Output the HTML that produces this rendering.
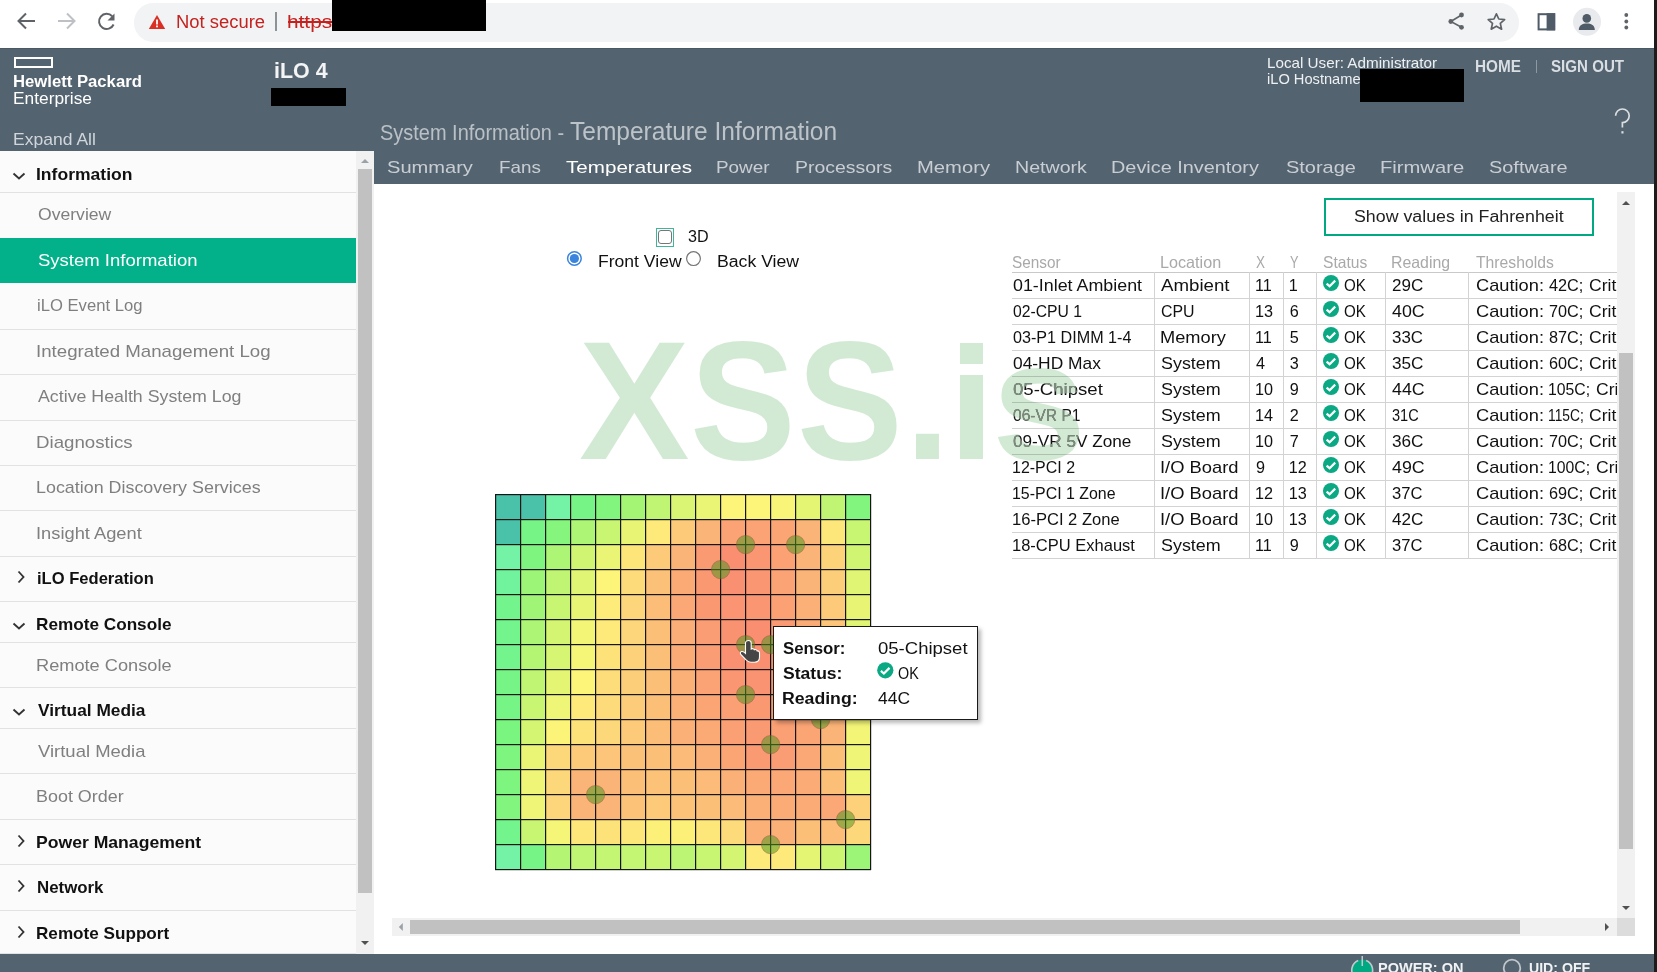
<!DOCTYPE html>
<html><head><meta charset="utf-8"><style>*{margin:0;padding:0}html,body{width:1657px;height:972px;overflow:hidden;background:#1c1c1c;position:relative}
.t{position:absolute;white-space:nowrap;transform-origin:0 0}</style></head><body>
<div style="position:absolute;left:0px;top:0px;width:1657px;height:48px;background:#ffffff;"></div>
<div style="position:absolute;left:1654px;top:0px;width:3px;height:972px;background:#1c1c1c;"></div>
<div style="position:absolute;left:134px;top:3px;width:1384.5px;height:38.6px;background:#f1f3f4;border-radius:19.3px;"></div>
<svg style="position:absolute;left:0;top:0" width="140" height="47">
      <g fill="none" stroke="#5f6368" stroke-width="2">
        <path d="M35 21 H19 M26 13.5 L18.5 21 L26 28.5"/>
      </g>
      <g fill="none" stroke="#bdc1c6" stroke-width="2">
        <path d="M58 21 H74 M67 13.5 L74.5 21 L67 28.5"/>
      </g>
      <g transform="translate(-1 0)"><path d="M113.2 16.2 A7.6 7.6 0 1 0 114.6 24.5" fill="none" stroke="#5f6368" stroke-width="2"/>
      <path d="M115.5 13.5 V20.5 H108.5 Z" fill="#5f6368"/></g>
    </svg>
<svg style="position:absolute;left:148px;top:13.5px" width="18" height="16">
      <path d="M9 1 L17.2 15 H0.8 Z" fill="#d93025"/>
      <rect x="8.1" y="5.5" width="1.8" height="5" fill="#fff"/><rect x="8.1" y="11.5" width="1.8" height="1.8" fill="#fff"/>
    </svg>
<div class="t" id="t0" style="left:175.98px;top:12.70px;font-size:18px;line-height:18px;font-weight:400;color:#c5221f;font-family:'Liberation Sans';transform:scaleX(1.0229);">Not secure</div>
<div style="position:absolute;left:275.3px;top:12.2px;width:1.8px;height:19.3px;background:#8d9297;"></div>
<div class="t" id="t1" style="left:286.84px;top:12.70px;font-size:18px;line-height:18px;font-weight:400;color:#c5221f;font-family:'Liberation Sans';transform:scaleX(1.1572);">https</div>
<div style="position:absolute;left:288px;top:21px;width:44px;height:1.5px;background:#c5221f;"></div>
<div style="position:absolute;left:332px;top:0px;width:154px;height:31px;background:#000;"></div>
<svg style="position:absolute;left:1430px;top:0" width="224" height="47">
      <g fill="#5f6368">
        <circle cx="31.5" cy="15" r="2.4"/>
        <circle cx="20.8" cy="21.5" r="2.4"/>
        <circle cx="31.5" cy="27.3" r="2.4"/>
      </g>
      <path d="M31.5 15 L20.8 21.5 L31.5 27.3" fill="none" stroke="#5f6368" stroke-width="1.6"/>
      <path d="M66.4 13.8 L68.8 19 L74.6 19.6 L70.3 23.4 L71.6 29.2 L66.4 26.2 L61.2 29.2 L62.5 23.4 L58.2 19.6 L64 19 Z" fill="none" stroke="#5f6368" stroke-width="1.7" stroke-linejoin="round"/>
      <rect x="108.6" y="14.2" width="15.6" height="15.2" fill="none" stroke="#4f5b66" stroke-width="2"/>
      <rect x="116.6" y="13.2" width="8.6" height="17.2" fill="#4f5b66"/>
      <circle cx="157" cy="21.8" r="14" fill="#e8eaed"/>
      <circle cx="156.8" cy="18.4" r="4.3" fill="#4f5b66"/>
      <path d="M148.8 30 C148.8 25.2 152.5 23.6 156.8 23.6 C161.1 23.6 164.8 25.2 164.8 30 Z" fill="#4f5b66"/>
      <g fill="#5f6368"><circle cx="196.3" cy="15" r="1.9"/><circle cx="196.3" cy="21.5" r="1.9"/><circle cx="196.3" cy="27.5" r="1.9"/></g>
    </svg>
<div style="position:absolute;left:0px;top:48px;width:1654px;height:136px;background:#546370;"></div>
<div style="position:absolute;left:0px;top:48px;width:1654px;height:1px;background:#4b5864;"></div>
<div style="position:absolute;left:14px;top:57px;width:39px;height:11px;background:transparent;border:2px solid #fff;box-sizing:border-box;"></div>
<div class="t" id="t2" style="left:12.96px;top:74.40px;font-size:16px;line-height:16px;font-weight:700;color:#fff;font-family:'Liberation Sans';transform:scaleX(1.0424);">Hewlett Packard</div>
<div class="t" id="t3" style="left:12.92px;top:90.60px;font-size:16px;line-height:16px;font-weight:400;color:#fff;font-family:'Liberation Sans';transform:scaleX(1.0830);">Enterprise</div>
<div class="t" id="t4" style="left:273.82px;top:60.27px;font-size:21.8px;line-height:21.8px;font-weight:700;color:#f4f4f4;font-family:'Liberation Sans';transform:scaleX(0.9835);">iLO 4</div>
<div style="position:absolute;left:271px;top:88px;width:75px;height:18px;background:#000;"></div>
<div class="t" id="t5" style="left:13.47px;top:130.55px;font-size:17px;line-height:17px;font-weight:400;color:#d0d6dc;font-family:'Liberation Sans';transform:scaleX(1.0315);">Expand All</div>
<div class="t" id="t6" style="left:1266.95px;top:56.27px;font-size:14.5px;line-height:14.5px;font-weight:400;color:#eef1f3;font-family:'Liberation Sans';transform:scaleX(1.0497);">Local User: Administrator</div>
<div class="t" id="t7" style="left:1266.50px;top:71.97px;font-size:14.5px;line-height:14.5px;font-weight:400;color:#eef1f3;font-family:'Liberation Sans';transform:scaleX(1.0096);">iLO Hostname</div>
<div style="position:absolute;left:1360px;top:69px;width:104px;height:33px;background:#000;"></div>
<div class="t" id="t8" style="left:1475.07px;top:58.48px;font-size:16.5px;line-height:16.5px;font-weight:700;color:#d9dee3;font-family:'Liberation Sans';transform:scaleX(0.9279);">HOME</div>
<div style="position:absolute;left:1535.5px;top:60px;width:1.2px;height:13px;background:#8c98a2;"></div>
<div class="t" id="t9" style="left:1550.50px;top:58.48px;font-size:16.5px;line-height:16.5px;font-weight:700;color:#d9dee3;font-family:'Liberation Sans';transform:scaleX(0.9162);">SIGN OUT</div>
<svg style="position:absolute;left:1610px;top:104px" width="24" height="32">
      <path d="M5.6 11.8 A6.8 6.8 0 1 1 12.4 18.6 V23.6" fill="none" stroke="#dcdfe2" stroke-width="1.7"/>
      <rect x="11.4" y="27.2" width="2.1" height="2.3" fill="#dcdfe2"/>
    </svg>
<div class="t" id="t10" style="left:379.50px;top:122.92px;font-size:21.5px;line-height:21.5px;font-weight:400;color:#b9c0c6;font-family:'Liberation Sans';font-weight:300;transform:scaleX(0.9284);">System Information - </div>
<div class="t" id="t11" style="left:570.00px;top:118.73px;font-size:25.5px;line-height:25.5px;font-weight:400;color:#bcc3c9;font-family:'Liberation Sans';font-weight:300;transform:scaleX(0.9616);">Temperature Information</div>
<div class="t" id="t12" style="left:387.00px;top:158.55px;font-size:17px;line-height:17px;font-weight:400;color:#c8ced3;font-family:'Liberation Sans';transform:scaleX(1.1812);">Summary</div>
<div class="t" id="t13" style="left:498.89px;top:158.55px;font-size:17px;line-height:17px;font-weight:400;color:#c8ced3;font-family:'Liberation Sans';transform:scaleX(1.1076);">Fans</div>
<div class="t" id="t14" style="left:566.00px;top:158.55px;font-size:17px;line-height:17px;font-weight:400;color:#ffffff;font-family:'Liberation Sans';transform:scaleX(1.2124);">Temperatures</div>
<div class="t" id="t15" style="left:716.29px;top:158.55px;font-size:17px;line-height:17px;font-weight:400;color:#c8ced3;font-family:'Liberation Sans';transform:scaleX(1.1110);">Power</div>
<div class="t" id="t16" style="left:795.16px;top:158.55px;font-size:17px;line-height:17px;font-weight:400;color:#c8ced3;font-family:'Liberation Sans';transform:scaleX(1.1434);">Processors</div>
<div class="t" id="t17" style="left:916.71px;top:158.55px;font-size:17px;line-height:17px;font-weight:400;color:#c8ced3;font-family:'Liberation Sans';transform:scaleX(1.1890);">Memory</div>
<div class="t" id="t18" style="left:1014.55px;top:158.55px;font-size:17px;line-height:17px;font-weight:400;color:#c8ced3;font-family:'Liberation Sans';transform:scaleX(1.1528);">Network</div>
<div class="t" id="t19" style="left:1111.23px;top:158.55px;font-size:17px;line-height:17px;font-weight:400;color:#c8ced3;font-family:'Liberation Sans';transform:scaleX(1.1680);">Device Inventory</div>
<div class="t" id="t20" style="left:1285.80px;top:158.55px;font-size:17px;line-height:17px;font-weight:400;color:#c8ced3;font-family:'Liberation Sans';transform:scaleX(1.1745);">Storage</div>
<div class="t" id="t21" style="left:1379.81px;top:158.55px;font-size:17px;line-height:17px;font-weight:400;color:#c8ced3;font-family:'Liberation Sans';transform:scaleX(1.1877);">Firmware</div>
<div class="t" id="t22" style="left:1488.90px;top:158.55px;font-size:17px;line-height:17px;font-weight:400;color:#c8ced3;font-family:'Liberation Sans';transform:scaleX(1.1721);">Software</div>
<div style="position:absolute;left:0px;top:151px;width:356px;height:803px;background:#fbfbfb;"></div>
<div style="position:absolute;left:356px;top:151px;width:18px;height:803px;background:#f1f1f1;"></div>
<div style="position:absolute;left:358px;top:169px;width:14px;height:724px;background:#c1c1c1;"></div>
<svg style="position:absolute;left:356px;top:151px" width="18" height="802">
      <path d="M5 12 L9 8 L13 12 Z" fill="#9ca1a5"/>
      <path d="M5 790 L13 790 L9 794 Z" fill="#505050"/>
    </svg>
<div class="t" id="t23" style="left:36.47px;top:165.55px;font-size:17px;line-height:17px;font-weight:700;color:#111;font-family:'Liberation Sans';transform:scaleX(1.0314);">Information</div>
<div style="position:absolute;left:0px;top:192px;width:356px;height:1.3px;background:#dfe3e5;"></div>
<svg style="position:absolute;left:12px;top:171.5px" width="15" height="9"><path d="M1.5 1.5 L7 6.5 L12.5 1.5" fill="none" stroke="#333" stroke-width="1.85"/></svg>
<div class="t" id="t24" style="left:37.50px;top:205.55px;font-size:17px;line-height:17px;font-weight:400;color:#7f7f7f;font-family:'Liberation Sans';transform:scaleX(1.0339);">Overview</div>
<div style="position:absolute;left:0px;top:238px;width:356px;height:45px;background:#02b189;"></div>
<div class="t" id="t25" style="left:37.50px;top:251.55px;font-size:17px;line-height:17px;font-weight:400;color:#ffffff;font-family:'Liberation Sans';transform:scaleX(1.0891);">System Information</div>
<div class="t" id="t26" style="left:36.52px;top:297.05px;font-size:17px;line-height:17px;font-weight:400;color:#7f7f7f;font-family:'Liberation Sans';transform:scaleX(0.9785);">iLO Event Log</div>
<div style="position:absolute;left:0px;top:329px;width:356px;height:1.3px;background:#dfe3e5;"></div>
<div class="t" id="t27" style="left:36.40px;top:343.05px;font-size:17px;line-height:17px;font-weight:400;color:#7f7f7f;font-family:'Liberation Sans';transform:scaleX(1.0983);">Integrated Management Log</div>
<div style="position:absolute;left:0px;top:374px;width:356px;height:1.3px;background:#dfe3e5;"></div>
<div class="t" id="t28" style="left:37.50px;top:388.05px;font-size:17px;line-height:17px;font-weight:400;color:#7f7f7f;font-family:'Liberation Sans';transform:scaleX(1.0454);">Active Health System Log</div>
<div style="position:absolute;left:0px;top:420px;width:356px;height:1.3px;background:#dfe3e5;"></div>
<div class="t" id="t29" style="left:36.40px;top:433.55px;font-size:17px;line-height:17px;font-weight:400;color:#7f7f7f;font-family:'Liberation Sans';transform:scaleX(1.0999);">Diagnostics</div>
<div style="position:absolute;left:0px;top:465px;width:356px;height:1.3px;background:#dfe3e5;"></div>
<div class="t" id="t30" style="left:36.45px;top:479.05px;font-size:17px;line-height:17px;font-weight:400;color:#7f7f7f;font-family:'Liberation Sans';transform:scaleX(1.0517);">Location Discovery Services</div>
<div style="position:absolute;left:0px;top:510px;width:356px;height:1.3px;background:#dfe3e5;"></div>
<div class="t" id="t31" style="left:36.42px;top:525.05px;font-size:17px;line-height:17px;font-weight:400;color:#7f7f7f;font-family:'Liberation Sans';transform:scaleX(1.0760);">Insight Agent</div>
<div style="position:absolute;left:0px;top:556px;width:356px;height:1.3px;background:#dfe3e5;"></div>
<div class="t" id="t32" style="left:36.53px;top:570.05px;font-size:17px;line-height:17px;font-weight:700;color:#111;font-family:'Liberation Sans';transform:scaleX(0.9741);">iLO Federation</div>
<div style="position:absolute;left:0px;top:601px;width:356px;height:1.3px;background:#dfe3e5;"></div>
<svg style="position:absolute;left:16.5px;top:570.0px" width="9" height="14"><path d="M1.5 1.5 L6.5 7 L1.5 12.5" fill="none" stroke="#333" stroke-width="1.85"/></svg>
<div class="t" id="t33" style="left:36.49px;top:615.55px;font-size:17px;line-height:17px;font-weight:700;color:#111;font-family:'Liberation Sans';transform:scaleX(1.0100);">Remote Console</div>
<div style="position:absolute;left:0px;top:642px;width:356px;height:1.3px;background:#dfe3e5;"></div>
<svg style="position:absolute;left:12px;top:621.5px" width="15" height="9"><path d="M1.5 1.5 L7 6.5 L12.5 1.5" fill="none" stroke="#333" stroke-width="1.85"/></svg>
<div class="t" id="t34" style="left:36.43px;top:656.55px;font-size:17px;line-height:17px;font-weight:400;color:#7f7f7f;font-family:'Liberation Sans';transform:scaleX(1.0706);">Remote Console</div>
<div style="position:absolute;left:0px;top:687px;width:356px;height:1.3px;background:#dfe3e5;"></div>
<div class="t" id="t35" style="left:37.50px;top:701.55px;font-size:17px;line-height:17px;font-weight:700;color:#111;font-family:'Liberation Sans';transform:scaleX(1.0185);">Virtual Media</div>
<div style="position:absolute;left:0px;top:728px;width:356px;height:1.3px;background:#dfe3e5;"></div>
<svg style="position:absolute;left:12px;top:707.5px" width="15" height="9"><path d="M1.5 1.5 L7 6.5 L12.5 1.5" fill="none" stroke="#333" stroke-width="1.85"/></svg>
<div class="t" id="t36" style="left:37.50px;top:742.55px;font-size:17px;line-height:17px;font-weight:400;color:#7f7f7f;font-family:'Liberation Sans';transform:scaleX(1.0860);">Virtual Media</div>
<div style="position:absolute;left:0px;top:773px;width:356px;height:1.3px;background:#dfe3e5;"></div>
<div class="t" id="t37" style="left:36.45px;top:788.05px;font-size:17px;line-height:17px;font-weight:400;color:#7f7f7f;font-family:'Liberation Sans';transform:scaleX(1.0547);">Boot Order</div>
<div style="position:absolute;left:0px;top:819px;width:356px;height:1.3px;background:#dfe3e5;"></div>
<div class="t" id="t38" style="left:36.47px;top:834.05px;font-size:17px;line-height:17px;font-weight:700;color:#111;font-family:'Liberation Sans';transform:scaleX(1.0347);">Power Management</div>
<div style="position:absolute;left:0px;top:864px;width:356px;height:1.3px;background:#dfe3e5;"></div>
<svg style="position:absolute;left:16.5px;top:834.0px" width="9" height="14"><path d="M1.5 1.5 L6.5 7 L1.5 12.5" fill="none" stroke="#333" stroke-width="1.85"/></svg>
<div class="t" id="t39" style="left:36.51px;top:879.05px;font-size:17px;line-height:17px;font-weight:700;color:#111;font-family:'Liberation Sans';transform:scaleX(0.9908);">Network</div>
<div style="position:absolute;left:0px;top:910px;width:356px;height:1.3px;background:#dfe3e5;"></div>
<svg style="position:absolute;left:16.5px;top:879.0px" width="9" height="14"><path d="M1.5 1.5 L6.5 7 L1.5 12.5" fill="none" stroke="#333" stroke-width="1.85"/></svg>
<div class="t" id="t40" style="left:36.49px;top:924.55px;font-size:17px;line-height:17px;font-weight:700;color:#111;font-family:'Liberation Sans';transform:scaleX(1.0071);">Remote Support</div>
<div style="position:absolute;left:0px;top:953px;width:356px;height:1.3px;background:#dfe3e5;"></div>
<svg style="position:absolute;left:16.5px;top:924.5px" width="9" height="14"><path d="M1.5 1.5 L6.5 7 L1.5 12.5" fill="none" stroke="#333" stroke-width="1.85"/></svg>
<div style="position:absolute;left:374px;top:184px;width:1280px;height:770px;background:#ffffff;"></div>
<div style="position:absolute;left:1617px;top:192px;width:17.5px;height:726px;background:#f1f1f1;"></div>
<div style="position:absolute;left:1619px;top:353px;width:13.5px;height:496px;background:#c1c1c1;"></div>
<svg style="position:absolute;left:1617px;top:192px" width="18" height="726"><path d="M5 13 L9 9 L13 13 Z" fill="#505050"/><path d="M5 714 L13 714 L9 718 Z" fill="#505050"/></svg>
<div style="position:absolute;left:392px;top:918px;width:1225px;height:18px;background:#f1f1f1;"></div>
<div style="position:absolute;left:410px;top:920px;width:1110px;height:13.7px;background:#c1c1c1;"></div>
<div style="position:absolute;left:1617px;top:918px;width:17.5px;height:18px;background:#dcdcdc;"></div>
<svg style="position:absolute;left:392px;top:918px" width="1225" height="18"><path d="M10.8 5 L10.8 13 L6.8 9 Z" fill="#9ca1a5"/><path d="M1213 5 L1213 13 L1217 9 Z" fill="#505050"/></svg>
<div style="position:absolute;left:1324px;top:197.7px;width:270px;height:38px;background:transparent;border:2px solid #01a982;box-sizing:border-box;"></div>
<div class="t" id="t41" style="left:1353.80px;top:208.90px;font-size:16px;line-height:16px;font-weight:400;color:#222;font-family:'Liberation Sans';transform:scaleX(1.1115);">Show values in Fahrenheit</div>
<div style="position:absolute;left:656px;top:228px;width:18px;height:19px;background:transparent;border:1px solid #3fb59a;box-sizing:border-box;"></div>
<div style="position:absolute;left:658px;top:230px;width:14px;height:14px;background:#fff;border:1.3px solid #767676;border-radius:3px;box-sizing:border-box;"></div>
<div class="t" id="t42" style="left:688.40px;top:228.62px;font-size:16.8px;line-height:16.8px;font-weight:400;color:#111;font-family:'Liberation Sans';transform:scaleX(0.9610);">3D</div>
<svg style="position:absolute;left:560px;top:245px" width="150" height="28"><circle cx="14.4" cy="13.5" r="6.8" fill="#fff" stroke="#3a84de" stroke-width="1.5"/><circle cx="14.4" cy="13.5" r="4.6" fill="#3a84de"/><circle cx="133.5" cy="13.6" r="6.9" fill="#fff" stroke="#767676" stroke-width="1.2"/></svg>
<div class="t" id="t43" style="left:597.50px;top:254.20px;font-size:16px;line-height:16px;font-weight:400;color:#111;font-family:'Liberation Sans';transform:scaleX(1.0975);">Front View</div>
<div class="t" id="t44" style="left:716.70px;top:254.20px;font-size:16px;line-height:16px;font-weight:400;color:#111;font-family:'Liberation Sans';transform:scaleX(1.1036);">Back View</div>
<div class="t" id="t45" style="left:1012.00px;top:253.97px;font-size:16.5px;line-height:16.5px;font-weight:400;color:#a9a9a9;font-family:'Liberation Sans';font-weight:300;transform:scaleX(0.9283);">Sensor</div>
<div class="t" id="t46" style="left:1160.02px;top:253.97px;font-size:16.5px;line-height:16.5px;font-weight:400;color:#a9a9a9;font-family:'Liberation Sans';font-weight:300;transform:scaleX(0.9803);">Location</div>
<div class="t" id="t47" style="left:1256.00px;top:253.97px;font-size:16.5px;line-height:16.5px;font-weight:400;color:#a9a9a9;font-family:'Liberation Sans';font-weight:300;transform:scaleX(0.8182);">X</div>
<div class="t" id="t48" style="left:1289.50px;top:253.97px;font-size:16.5px;line-height:16.5px;font-weight:400;color:#a9a9a9;font-family:'Liberation Sans';font-weight:300;transform:scaleX(0.7727);">Y</div>
<div class="t" id="t49" style="left:1323.00px;top:253.97px;font-size:16.5px;line-height:16.5px;font-weight:400;color:#a9a9a9;font-family:'Liberation Sans';font-weight:300;transform:scaleX(0.9457);">Status</div>
<div class="t" id="t50" style="left:1391.04px;top:253.97px;font-size:16.5px;line-height:16.5px;font-weight:400;color:#a9a9a9;font-family:'Liberation Sans';font-weight:300;transform:scaleX(0.9621);">Reading</div>
<div class="t" id="t51" style="left:1475.60px;top:253.97px;font-size:16.5px;line-height:16.5px;font-weight:400;color:#a9a9a9;font-family:'Liberation Sans';font-weight:300;transform:scaleX(0.9524);">Thresholds</div>
<div style="position:absolute;left:1012px;top:272px;width:605px;height:1.3px;background:#c9c9c9;"></div>
<div style="position:absolute;left:1011px;top:272px;width:606px;height:288px;overflow:hidden">
<div style="position:absolute;left:1px;top:26px;width:605px;height:1.3px;background:#d3d3d3;"></div>
<div style="position:absolute;left:143px;top:0px;width:1.2px;height:26px;background:#d3d3d3;"></div>
<div style="position:absolute;left:238px;top:0px;width:1.2px;height:26px;background:#d3d3d3;"></div>
<div style="position:absolute;left:272px;top:0px;width:1.2px;height:26px;background:#d3d3d3;"></div>
<div style="position:absolute;left:305px;top:0px;width:1.2px;height:26px;background:#d3d3d3;"></div>
<div style="position:absolute;left:374px;top:0px;width:1.2px;height:26px;background:#d3d3d3;"></div>
<div style="position:absolute;left:457px;top:0px;width:1.2px;height:26px;background:#d3d3d3;"></div>
<div class="t" id="t52" style="left:1.60px;top:5.23px;font-size:16.2px;line-height:16.2px;font-weight:400;color:#111;font-family:'Liberation Sans';transform:scaleX(1.1033);">01-Inlet Ambient</div>
<div class="t" id="t53" style="left:150.30px;top:5.23px;font-size:16.2px;line-height:16.2px;font-weight:400;color:#111;font-family:'Liberation Sans';transform:scaleX(1.1539);">Ambient</div>
<div class="t" id="t54" style="left:244.00px;top:5.23px;font-size:16.2px;line-height:16.2px;font-weight:400;color:#111;font-family:'Liberation Sans';">11</div>
<div class="t" id="t55" style="left:277.70px;top:5.23px;font-size:16.2px;line-height:16.2px;font-weight:400;color:#111;font-family:'Liberation Sans';">1</div>
<svg style="position:absolute;left:312px;top:3px" width="17" height="17"><circle cx="8" cy="8" r="8" fill="#0aa883"/><path d="M3.6 8.6 L6.6 11.2 L12.2 5.6" fill="none" stroke="#fff" stroke-width="2.2"/></svg>
<div class="t" id="t56" style="left:332.80px;top:5.23px;font-size:16.2px;line-height:16.2px;font-weight:400;color:#111;font-family:'Liberation Sans';transform:scaleX(0.9368);">OK</div>
<div class="t" id="t57" style="left:381.20px;top:5.23px;font-size:16.2px;line-height:16.2px;font-weight:400;color:#111;font-family:'Liberation Sans';transform:scaleX(1.0531);">29C</div>
<div class="t" id="t58" style="left:464.60px;top:5.23px;font-size:16.2px;line-height:16.2px;font-weight:400;color:#111;font-family:'Liberation Sans';transform:scaleX(1.1272);">Caution:</div>
<div class="t" id="t59" style="left:537.70px;top:5.23px;font-size:16.2px;line-height:16.2px;font-weight:400;color:#111;font-family:'Liberation Sans';transform:scaleX(1.0031);">42C;</div>
<div class="t" id="t60" style="left:577.70px;top:5.23px;font-size:16.2px;line-height:16.2px;font-weight:400;color:#111;font-family:'Liberation Sans';transform:scaleX(1.0827);">Critical: 99C</div>
<div style="position:absolute;left:1px;top:52px;width:605px;height:1.3px;background:#d3d3d3;"></div>
<div style="position:absolute;left:143px;top:26px;width:1.2px;height:26px;background:#d3d3d3;"></div>
<div style="position:absolute;left:238px;top:26px;width:1.2px;height:26px;background:#d3d3d3;"></div>
<div style="position:absolute;left:272px;top:26px;width:1.2px;height:26px;background:#d3d3d3;"></div>
<div style="position:absolute;left:305px;top:26px;width:1.2px;height:26px;background:#d3d3d3;"></div>
<div style="position:absolute;left:374px;top:26px;width:1.2px;height:26px;background:#d3d3d3;"></div>
<div style="position:absolute;left:457px;top:26px;width:1.2px;height:26px;background:#d3d3d3;"></div>
<div class="t" id="t61" style="left:1.60px;top:31.23px;font-size:16.2px;line-height:16.2px;font-weight:400;color:#111;font-family:'Liberation Sans';transform:scaleX(0.9709);">02-CPU 1</div>
<div class="t" id="t62" style="left:150.30px;top:31.23px;font-size:16.2px;line-height:16.2px;font-weight:400;color:#111;font-family:'Liberation Sans';transform:scaleX(0.9825);">CPU</div>
<div class="t" id="t63" style="left:244.00px;top:31.23px;font-size:16.2px;line-height:16.2px;font-weight:400;color:#111;font-family:'Liberation Sans';">13</div>
<div class="t" id="t64" style="left:278.70px;top:31.23px;font-size:16.2px;line-height:16.2px;font-weight:400;color:#111;font-family:'Liberation Sans';">6</div>
<svg style="position:absolute;left:312px;top:29px" width="17" height="17"><circle cx="8" cy="8" r="8" fill="#0aa883"/><path d="M3.6 8.6 L6.6 11.2 L12.2 5.6" fill="none" stroke="#fff" stroke-width="2.2"/></svg>
<div class="t" id="t65" style="left:332.80px;top:31.23px;font-size:16.2px;line-height:16.2px;font-weight:400;color:#111;font-family:'Liberation Sans';transform:scaleX(0.9368);">OK</div>
<div class="t" id="t66" style="left:381.20px;top:31.23px;font-size:16.2px;line-height:16.2px;font-weight:400;color:#111;font-family:'Liberation Sans';transform:scaleX(1.0998);">40C</div>
<div class="t" id="t67" style="left:464.60px;top:31.23px;font-size:16.2px;line-height:16.2px;font-weight:400;color:#111;font-family:'Liberation Sans';transform:scaleX(1.1272);">Caution:</div>
<div class="t" id="t68" style="left:537.70px;top:31.23px;font-size:16.2px;line-height:16.2px;font-weight:400;color:#111;font-family:'Liberation Sans';transform:scaleX(1.0031);">70C;</div>
<div class="t" id="t69" style="left:577.70px;top:31.23px;font-size:16.2px;line-height:16.2px;font-weight:400;color:#111;font-family:'Liberation Sans';transform:scaleX(1.0827);">Critical: 99C</div>
<div style="position:absolute;left:1px;top:78px;width:605px;height:1.3px;background:#d3d3d3;"></div>
<div style="position:absolute;left:143px;top:52px;width:1.2px;height:26px;background:#d3d3d3;"></div>
<div style="position:absolute;left:238px;top:52px;width:1.2px;height:26px;background:#d3d3d3;"></div>
<div style="position:absolute;left:272px;top:52px;width:1.2px;height:26px;background:#d3d3d3;"></div>
<div style="position:absolute;left:305px;top:52px;width:1.2px;height:26px;background:#d3d3d3;"></div>
<div style="position:absolute;left:374px;top:52px;width:1.2px;height:26px;background:#d3d3d3;"></div>
<div style="position:absolute;left:457px;top:52px;width:1.2px;height:26px;background:#d3d3d3;"></div>
<div class="t" id="t70" style="left:1.60px;top:57.23px;font-size:16.2px;line-height:16.2px;font-weight:400;color:#111;font-family:'Liberation Sans';transform:scaleX(0.9971);">03-P1 DIMM 1-4</div>
<div class="t" id="t71" style="left:149.17px;top:57.23px;font-size:16.2px;line-height:16.2px;font-weight:400;color:#111;font-family:'Liberation Sans';transform:scaleX(1.1257);">Memory</div>
<div class="t" id="t72" style="left:244.00px;top:57.23px;font-size:16.2px;line-height:16.2px;font-weight:400;color:#111;font-family:'Liberation Sans';">11</div>
<div class="t" id="t73" style="left:278.70px;top:57.23px;font-size:16.2px;line-height:16.2px;font-weight:400;color:#111;font-family:'Liberation Sans';">5</div>
<svg style="position:absolute;left:312px;top:55px" width="17" height="17"><circle cx="8" cy="8" r="8" fill="#0aa883"/><path d="M3.6 8.6 L6.6 11.2 L12.2 5.6" fill="none" stroke="#fff" stroke-width="2.2"/></svg>
<div class="t" id="t74" style="left:332.80px;top:57.23px;font-size:16.2px;line-height:16.2px;font-weight:400;color:#111;font-family:'Liberation Sans';transform:scaleX(0.9368);">OK</div>
<div class="t" id="t75" style="left:381.20px;top:57.23px;font-size:16.2px;line-height:16.2px;font-weight:400;color:#111;font-family:'Liberation Sans';transform:scaleX(1.0431);">33C</div>
<div class="t" id="t76" style="left:464.60px;top:57.23px;font-size:16.2px;line-height:16.2px;font-weight:400;color:#111;font-family:'Liberation Sans';transform:scaleX(1.1272);">Caution:</div>
<div class="t" id="t77" style="left:537.70px;top:57.23px;font-size:16.2px;line-height:16.2px;font-weight:400;color:#111;font-family:'Liberation Sans';transform:scaleX(1.0031);">87C;</div>
<div class="t" id="t78" style="left:577.70px;top:57.23px;font-size:16.2px;line-height:16.2px;font-weight:400;color:#111;font-family:'Liberation Sans';transform:scaleX(1.0827);">Critical: 99C</div>
<div style="position:absolute;left:1px;top:104px;width:605px;height:1.3px;background:#d3d3d3;"></div>
<div style="position:absolute;left:143px;top:78px;width:1.2px;height:26px;background:#d3d3d3;"></div>
<div style="position:absolute;left:238px;top:78px;width:1.2px;height:26px;background:#d3d3d3;"></div>
<div style="position:absolute;left:272px;top:78px;width:1.2px;height:26px;background:#d3d3d3;"></div>
<div style="position:absolute;left:305px;top:78px;width:1.2px;height:26px;background:#d3d3d3;"></div>
<div style="position:absolute;left:374px;top:78px;width:1.2px;height:26px;background:#d3d3d3;"></div>
<div style="position:absolute;left:457px;top:78px;width:1.2px;height:26px;background:#d3d3d3;"></div>
<div class="t" id="t79" style="left:1.60px;top:83.23px;font-size:16.2px;line-height:16.2px;font-weight:400;color:#111;font-family:'Liberation Sans';transform:scaleX(1.0739);">04-HD Max</div>
<div class="t" id="t80" style="left:150.30px;top:83.23px;font-size:16.2px;line-height:16.2px;font-weight:400;color:#111;font-family:'Liberation Sans';transform:scaleX(1.1069);">System</div>
<div class="t" id="t81" style="left:245.00px;top:83.23px;font-size:16.2px;line-height:16.2px;font-weight:400;color:#111;font-family:'Liberation Sans';">4</div>
<div class="t" id="t82" style="left:278.70px;top:83.23px;font-size:16.2px;line-height:16.2px;font-weight:400;color:#111;font-family:'Liberation Sans';">3</div>
<svg style="position:absolute;left:312px;top:81px" width="17" height="17"><circle cx="8" cy="8" r="8" fill="#0aa883"/><path d="M3.6 8.6 L6.6 11.2 L12.2 5.6" fill="none" stroke="#fff" stroke-width="2.2"/></svg>
<div class="t" id="t83" style="left:332.80px;top:83.23px;font-size:16.2px;line-height:16.2px;font-weight:400;color:#111;font-family:'Liberation Sans';transform:scaleX(0.9368);">OK</div>
<div class="t" id="t84" style="left:381.20px;top:83.23px;font-size:16.2px;line-height:16.2px;font-weight:400;color:#111;font-family:'Liberation Sans';transform:scaleX(1.0598);">35C</div>
<div class="t" id="t85" style="left:464.60px;top:83.23px;font-size:16.2px;line-height:16.2px;font-weight:400;color:#111;font-family:'Liberation Sans';transform:scaleX(1.1272);">Caution:</div>
<div class="t" id="t86" style="left:537.70px;top:83.23px;font-size:16.2px;line-height:16.2px;font-weight:400;color:#111;font-family:'Liberation Sans';transform:scaleX(1.0031);">60C;</div>
<div class="t" id="t87" style="left:577.70px;top:83.23px;font-size:16.2px;line-height:16.2px;font-weight:400;color:#111;font-family:'Liberation Sans';transform:scaleX(1.0827);">Critical: 99C</div>
<div style="position:absolute;left:1px;top:130px;width:605px;height:1.3px;background:#d3d3d3;"></div>
<div style="position:absolute;left:143px;top:104px;width:1.2px;height:26px;background:#d3d3d3;"></div>
<div style="position:absolute;left:238px;top:104px;width:1.2px;height:26px;background:#d3d3d3;"></div>
<div style="position:absolute;left:272px;top:104px;width:1.2px;height:26px;background:#d3d3d3;"></div>
<div style="position:absolute;left:305px;top:104px;width:1.2px;height:26px;background:#d3d3d3;"></div>
<div style="position:absolute;left:374px;top:104px;width:1.2px;height:26px;background:#d3d3d3;"></div>
<div style="position:absolute;left:457px;top:104px;width:1.2px;height:26px;background:#d3d3d3;"></div>
<div class="t" id="t88" style="left:1.60px;top:109.23px;font-size:16.2px;line-height:16.2px;font-weight:400;color:#111;font-family:'Liberation Sans';transform:scaleX(1.1474);">05-Chipset</div>
<div class="t" id="t89" style="left:150.30px;top:109.23px;font-size:16.2px;line-height:16.2px;font-weight:400;color:#111;font-family:'Liberation Sans';transform:scaleX(1.1069);">System</div>
<div class="t" id="t90" style="left:244.00px;top:109.23px;font-size:16.2px;line-height:16.2px;font-weight:400;color:#111;font-family:'Liberation Sans';">10</div>
<div class="t" id="t91" style="left:278.70px;top:109.23px;font-size:16.2px;line-height:16.2px;font-weight:400;color:#111;font-family:'Liberation Sans';">9</div>
<svg style="position:absolute;left:312px;top:107px" width="17" height="17"><circle cx="8" cy="8" r="8" fill="#0aa883"/><path d="M3.6 8.6 L6.6 11.2 L12.2 5.6" fill="none" stroke="#fff" stroke-width="2.2"/></svg>
<div class="t" id="t92" style="left:332.80px;top:109.23px;font-size:16.2px;line-height:16.2px;font-weight:400;color:#111;font-family:'Liberation Sans';transform:scaleX(0.9368);">OK</div>
<div class="t" id="t93" style="left:381.20px;top:109.23px;font-size:16.2px;line-height:16.2px;font-weight:400;color:#111;font-family:'Liberation Sans';transform:scaleX(1.0998);">44C</div>
<div class="t" id="t94" style="left:464.60px;top:109.23px;font-size:16.2px;line-height:16.2px;font-weight:400;color:#111;font-family:'Liberation Sans';transform:scaleX(1.1272);">Caution:</div>
<div class="t" id="t95" style="left:536.73px;top:109.23px;font-size:16.2px;line-height:16.2px;font-weight:400;color:#111;font-family:'Liberation Sans';transform:scaleX(0.9737);">105C;</div>
<div class="t" id="t96" style="left:584.50px;top:109.23px;font-size:16.2px;line-height:16.2px;font-weight:400;color:#111;font-family:'Liberation Sans';transform:scaleX(1.0827);">Critical: 99C</div>
<div style="position:absolute;left:1px;top:156px;width:605px;height:1.3px;background:#d3d3d3;"></div>
<div style="position:absolute;left:143px;top:130px;width:1.2px;height:26px;background:#d3d3d3;"></div>
<div style="position:absolute;left:238px;top:130px;width:1.2px;height:26px;background:#d3d3d3;"></div>
<div style="position:absolute;left:272px;top:130px;width:1.2px;height:26px;background:#d3d3d3;"></div>
<div style="position:absolute;left:305px;top:130px;width:1.2px;height:26px;background:#d3d3d3;"></div>
<div style="position:absolute;left:374px;top:130px;width:1.2px;height:26px;background:#d3d3d3;"></div>
<div style="position:absolute;left:457px;top:130px;width:1.2px;height:26px;background:#d3d3d3;"></div>
<div class="t" id="t97" style="left:1.60px;top:135.23px;font-size:16.2px;line-height:16.2px;font-weight:400;color:#111;font-family:'Liberation Sans';transform:scaleX(0.9604);">06-VR P1</div>
<div class="t" id="t98" style="left:150.30px;top:135.23px;font-size:16.2px;line-height:16.2px;font-weight:400;color:#111;font-family:'Liberation Sans';transform:scaleX(1.1069);">System</div>
<div class="t" id="t99" style="left:244.00px;top:135.23px;font-size:16.2px;line-height:16.2px;font-weight:400;color:#111;font-family:'Liberation Sans';">14</div>
<div class="t" id="t100" style="left:278.70px;top:135.23px;font-size:16.2px;line-height:16.2px;font-weight:400;color:#111;font-family:'Liberation Sans';">2</div>
<svg style="position:absolute;left:312px;top:133px" width="17" height="17"><circle cx="8" cy="8" r="8" fill="#0aa883"/><path d="M3.6 8.6 L6.6 11.2 L12.2 5.6" fill="none" stroke="#fff" stroke-width="2.2"/></svg>
<div class="t" id="t101" style="left:332.80px;top:135.23px;font-size:16.2px;line-height:16.2px;font-weight:400;color:#111;font-family:'Liberation Sans';transform:scaleX(0.9368);">OK</div>
<div class="t" id="t102" style="left:381.20px;top:135.23px;font-size:16.2px;line-height:16.2px;font-weight:400;color:#111;font-family:'Liberation Sans';transform:scaleX(0.8998);">31C</div>
<div class="t" id="t103" style="left:464.60px;top:135.23px;font-size:16.2px;line-height:16.2px;font-weight:400;color:#111;font-family:'Liberation Sans';transform:scaleX(1.1272);">Caution:</div>
<div class="t" id="t104" style="left:536.85px;top:135.23px;font-size:16.2px;line-height:16.2px;font-weight:400;color:#111;font-family:'Liberation Sans';transform:scaleX(0.8519);">115C;</div>
<div class="t" id="t105" style="left:578.40px;top:135.23px;font-size:16.2px;line-height:16.2px;font-weight:400;color:#111;font-family:'Liberation Sans';transform:scaleX(1.0827);">Critical: 99C</div>
<div style="position:absolute;left:1px;top:182px;width:605px;height:1.3px;background:#d3d3d3;"></div>
<div style="position:absolute;left:143px;top:156px;width:1.2px;height:26px;background:#d3d3d3;"></div>
<div style="position:absolute;left:238px;top:156px;width:1.2px;height:26px;background:#d3d3d3;"></div>
<div style="position:absolute;left:272px;top:156px;width:1.2px;height:26px;background:#d3d3d3;"></div>
<div style="position:absolute;left:305px;top:156px;width:1.2px;height:26px;background:#d3d3d3;"></div>
<div style="position:absolute;left:374px;top:156px;width:1.2px;height:26px;background:#d3d3d3;"></div>
<div style="position:absolute;left:457px;top:156px;width:1.2px;height:26px;background:#d3d3d3;"></div>
<div class="t" id="t106" style="left:1.60px;top:161.23px;font-size:16.2px;line-height:16.2px;font-weight:400;color:#111;font-family:'Liberation Sans';transform:scaleX(1.0612);">09-VR 5V Zone</div>
<div class="t" id="t107" style="left:150.30px;top:161.23px;font-size:16.2px;line-height:16.2px;font-weight:400;color:#111;font-family:'Liberation Sans';transform:scaleX(1.1069);">System</div>
<div class="t" id="t108" style="left:244.00px;top:161.23px;font-size:16.2px;line-height:16.2px;font-weight:400;color:#111;font-family:'Liberation Sans';">10</div>
<div class="t" id="t109" style="left:278.70px;top:161.23px;font-size:16.2px;line-height:16.2px;font-weight:400;color:#111;font-family:'Liberation Sans';">7</div>
<svg style="position:absolute;left:312px;top:159px" width="17" height="17"><circle cx="8" cy="8" r="8" fill="#0aa883"/><path d="M3.6 8.6 L6.6 11.2 L12.2 5.6" fill="none" stroke="#fff" stroke-width="2.2"/></svg>
<div class="t" id="t110" style="left:332.80px;top:161.23px;font-size:16.2px;line-height:16.2px;font-weight:400;color:#111;font-family:'Liberation Sans';transform:scaleX(0.9368);">OK</div>
<div class="t" id="t111" style="left:381.20px;top:161.23px;font-size:16.2px;line-height:16.2px;font-weight:400;color:#111;font-family:'Liberation Sans';transform:scaleX(1.0598);">36C</div>
<div class="t" id="t112" style="left:464.60px;top:161.23px;font-size:16.2px;line-height:16.2px;font-weight:400;color:#111;font-family:'Liberation Sans';transform:scaleX(1.1272);">Caution:</div>
<div class="t" id="t113" style="left:537.70px;top:161.23px;font-size:16.2px;line-height:16.2px;font-weight:400;color:#111;font-family:'Liberation Sans';transform:scaleX(1.0031);">70C;</div>
<div class="t" id="t114" style="left:577.70px;top:161.23px;font-size:16.2px;line-height:16.2px;font-weight:400;color:#111;font-family:'Liberation Sans';transform:scaleX(1.0827);">Critical: 99C</div>
<div style="position:absolute;left:1px;top:208px;width:605px;height:1.3px;background:#d3d3d3;"></div>
<div style="position:absolute;left:143px;top:182px;width:1.2px;height:26px;background:#d3d3d3;"></div>
<div style="position:absolute;left:238px;top:182px;width:1.2px;height:26px;background:#d3d3d3;"></div>
<div style="position:absolute;left:272px;top:182px;width:1.2px;height:26px;background:#d3d3d3;"></div>
<div style="position:absolute;left:305px;top:182px;width:1.2px;height:26px;background:#d3d3d3;"></div>
<div style="position:absolute;left:374px;top:182px;width:1.2px;height:26px;background:#d3d3d3;"></div>
<div style="position:absolute;left:457px;top:182px;width:1.2px;height:26px;background:#d3d3d3;"></div>
<div class="t" id="t115" style="left:0.61px;top:187.23px;font-size:16.2px;line-height:16.2px;font-weight:400;color:#111;font-family:'Liberation Sans';transform:scaleX(0.9876);">12-PCI 2</div>
<div class="t" id="t116" style="left:149.17px;top:187.23px;font-size:16.2px;line-height:16.2px;font-weight:400;color:#111;font-family:'Liberation Sans';transform:scaleX(1.1341);">I/O Board</div>
<div class="t" id="t117" style="left:245.00px;top:187.23px;font-size:16.2px;line-height:16.2px;font-weight:400;color:#111;font-family:'Liberation Sans';">9</div>
<div class="t" id="t118" style="left:277.70px;top:187.23px;font-size:16.2px;line-height:16.2px;font-weight:400;color:#111;font-family:'Liberation Sans';">12</div>
<svg style="position:absolute;left:312px;top:185px" width="17" height="17"><circle cx="8" cy="8" r="8" fill="#0aa883"/><path d="M3.6 8.6 L6.6 11.2 L12.2 5.6" fill="none" stroke="#fff" stroke-width="2.2"/></svg>
<div class="t" id="t119" style="left:332.80px;top:187.23px;font-size:16.2px;line-height:16.2px;font-weight:400;color:#111;font-family:'Liberation Sans';transform:scaleX(0.9368);">OK</div>
<div class="t" id="t120" style="left:381.20px;top:187.23px;font-size:16.2px;line-height:16.2px;font-weight:400;color:#111;font-family:'Liberation Sans';transform:scaleX(1.0998);">49C</div>
<div class="t" id="t121" style="left:464.60px;top:187.23px;font-size:16.2px;line-height:16.2px;font-weight:400;color:#111;font-family:'Liberation Sans';transform:scaleX(1.1272);">Caution:</div>
<div class="t" id="t122" style="left:536.73px;top:187.23px;font-size:16.2px;line-height:16.2px;font-weight:400;color:#111;font-family:'Liberation Sans';transform:scaleX(0.9737);">100C;</div>
<div class="t" id="t123" style="left:584.50px;top:187.23px;font-size:16.2px;line-height:16.2px;font-weight:400;color:#111;font-family:'Liberation Sans';transform:scaleX(1.0827);">Critical: 99C</div>
<div style="position:absolute;left:1px;top:234px;width:605px;height:1.3px;background:#d3d3d3;"></div>
<div style="position:absolute;left:143px;top:208px;width:1.2px;height:26px;background:#d3d3d3;"></div>
<div style="position:absolute;left:238px;top:208px;width:1.2px;height:26px;background:#d3d3d3;"></div>
<div style="position:absolute;left:272px;top:208px;width:1.2px;height:26px;background:#d3d3d3;"></div>
<div style="position:absolute;left:305px;top:208px;width:1.2px;height:26px;background:#d3d3d3;"></div>
<div style="position:absolute;left:374px;top:208px;width:1.2px;height:26px;background:#d3d3d3;"></div>
<div style="position:absolute;left:457px;top:208px;width:1.2px;height:26px;background:#d3d3d3;"></div>
<div class="t" id="t124" style="left:0.62px;top:213.23px;font-size:16.2px;line-height:16.2px;font-weight:400;color:#111;font-family:'Liberation Sans';transform:scaleX(0.9840);">15-PCI 1 Zone</div>
<div class="t" id="t125" style="left:149.17px;top:213.23px;font-size:16.2px;line-height:16.2px;font-weight:400;color:#111;font-family:'Liberation Sans';transform:scaleX(1.1341);">I/O Board</div>
<div class="t" id="t126" style="left:244.00px;top:213.23px;font-size:16.2px;line-height:16.2px;font-weight:400;color:#111;font-family:'Liberation Sans';">12</div>
<div class="t" id="t127" style="left:277.70px;top:213.23px;font-size:16.2px;line-height:16.2px;font-weight:400;color:#111;font-family:'Liberation Sans';">13</div>
<svg style="position:absolute;left:312px;top:211px" width="17" height="17"><circle cx="8" cy="8" r="8" fill="#0aa883"/><path d="M3.6 8.6 L6.6 11.2 L12.2 5.6" fill="none" stroke="#fff" stroke-width="2.2"/></svg>
<div class="t" id="t128" style="left:332.80px;top:213.23px;font-size:16.2px;line-height:16.2px;font-weight:400;color:#111;font-family:'Liberation Sans';transform:scaleX(0.9368);">OK</div>
<div class="t" id="t129" style="left:381.20px;top:213.23px;font-size:16.2px;line-height:16.2px;font-weight:400;color:#111;font-family:'Liberation Sans';transform:scaleX(1.0231);">37C</div>
<div class="t" id="t130" style="left:464.60px;top:213.23px;font-size:16.2px;line-height:16.2px;font-weight:400;color:#111;font-family:'Liberation Sans';transform:scaleX(1.1272);">Caution:</div>
<div class="t" id="t131" style="left:537.70px;top:213.23px;font-size:16.2px;line-height:16.2px;font-weight:400;color:#111;font-family:'Liberation Sans';transform:scaleX(1.0031);">69C;</div>
<div class="t" id="t132" style="left:577.70px;top:213.23px;font-size:16.2px;line-height:16.2px;font-weight:400;color:#111;font-family:'Liberation Sans';transform:scaleX(1.0827);">Critical: 99C</div>
<div style="position:absolute;left:1px;top:260px;width:605px;height:1.3px;background:#d3d3d3;"></div>
<div style="position:absolute;left:143px;top:234px;width:1.2px;height:26px;background:#d3d3d3;"></div>
<div style="position:absolute;left:238px;top:234px;width:1.2px;height:26px;background:#d3d3d3;"></div>
<div style="position:absolute;left:272px;top:234px;width:1.2px;height:26px;background:#d3d3d3;"></div>
<div style="position:absolute;left:305px;top:234px;width:1.2px;height:26px;background:#d3d3d3;"></div>
<div style="position:absolute;left:374px;top:234px;width:1.2px;height:26px;background:#d3d3d3;"></div>
<div style="position:absolute;left:457px;top:234px;width:1.2px;height:26px;background:#d3d3d3;"></div>
<div class="t" id="t133" style="left:0.58px;top:239.23px;font-size:16.2px;line-height:16.2px;font-weight:400;color:#111;font-family:'Liberation Sans';transform:scaleX(1.0223);">16-PCI 2 Zone</div>
<div class="t" id="t134" style="left:149.17px;top:239.23px;font-size:16.2px;line-height:16.2px;font-weight:400;color:#111;font-family:'Liberation Sans';transform:scaleX(1.1341);">I/O Board</div>
<div class="t" id="t135" style="left:244.00px;top:239.23px;font-size:16.2px;line-height:16.2px;font-weight:400;color:#111;font-family:'Liberation Sans';">10</div>
<div class="t" id="t136" style="left:277.70px;top:239.23px;font-size:16.2px;line-height:16.2px;font-weight:400;color:#111;font-family:'Liberation Sans';">13</div>
<svg style="position:absolute;left:312px;top:237px" width="17" height="17"><circle cx="8" cy="8" r="8" fill="#0aa883"/><path d="M3.6 8.6 L6.6 11.2 L12.2 5.6" fill="none" stroke="#fff" stroke-width="2.2"/></svg>
<div class="t" id="t137" style="left:332.80px;top:239.23px;font-size:16.2px;line-height:16.2px;font-weight:400;color:#111;font-family:'Liberation Sans';transform:scaleX(0.9368);">OK</div>
<div class="t" id="t138" style="left:381.20px;top:239.23px;font-size:16.2px;line-height:16.2px;font-weight:400;color:#111;font-family:'Liberation Sans';transform:scaleX(1.0598);">42C</div>
<div class="t" id="t139" style="left:464.60px;top:239.23px;font-size:16.2px;line-height:16.2px;font-weight:400;color:#111;font-family:'Liberation Sans';transform:scaleX(1.1272);">Caution:</div>
<div class="t" id="t140" style="left:537.70px;top:239.23px;font-size:16.2px;line-height:16.2px;font-weight:400;color:#111;font-family:'Liberation Sans';transform:scaleX(1.0031);">73C;</div>
<div class="t" id="t141" style="left:577.70px;top:239.23px;font-size:16.2px;line-height:16.2px;font-weight:400;color:#111;font-family:'Liberation Sans';transform:scaleX(1.0827);">Critical: 99C</div>
<div style="position:absolute;left:1px;top:286px;width:605px;height:1.3px;background:#d3d3d3;"></div>
<div style="position:absolute;left:143px;top:260px;width:1.2px;height:26px;background:#d3d3d3;"></div>
<div style="position:absolute;left:238px;top:260px;width:1.2px;height:26px;background:#d3d3d3;"></div>
<div style="position:absolute;left:272px;top:260px;width:1.2px;height:26px;background:#d3d3d3;"></div>
<div style="position:absolute;left:305px;top:260px;width:1.2px;height:26px;background:#d3d3d3;"></div>
<div style="position:absolute;left:374px;top:260px;width:1.2px;height:26px;background:#d3d3d3;"></div>
<div style="position:absolute;left:457px;top:260px;width:1.2px;height:26px;background:#d3d3d3;"></div>
<div class="t" id="t142" style="left:0.58px;top:265.23px;font-size:16.2px;line-height:16.2px;font-weight:400;color:#111;font-family:'Liberation Sans';transform:scaleX(1.0195);">18-CPU Exhaust</div>
<div class="t" id="t143" style="left:150.30px;top:265.23px;font-size:16.2px;line-height:16.2px;font-weight:400;color:#111;font-family:'Liberation Sans';transform:scaleX(1.1069);">System</div>
<div class="t" id="t144" style="left:244.00px;top:265.23px;font-size:16.2px;line-height:16.2px;font-weight:400;color:#111;font-family:'Liberation Sans';">11</div>
<div class="t" id="t145" style="left:278.70px;top:265.23px;font-size:16.2px;line-height:16.2px;font-weight:400;color:#111;font-family:'Liberation Sans';">9</div>
<svg style="position:absolute;left:312px;top:263px" width="17" height="17"><circle cx="8" cy="8" r="8" fill="#0aa883"/><path d="M3.6 8.6 L6.6 11.2 L12.2 5.6" fill="none" stroke="#fff" stroke-width="2.2"/></svg>
<div class="t" id="t146" style="left:332.80px;top:265.23px;font-size:16.2px;line-height:16.2px;font-weight:400;color:#111;font-family:'Liberation Sans';transform:scaleX(0.9368);">OK</div>
<div class="t" id="t147" style="left:381.20px;top:265.23px;font-size:16.2px;line-height:16.2px;font-weight:400;color:#111;font-family:'Liberation Sans';transform:scaleX(1.0231);">37C</div>
<div class="t" id="t148" style="left:464.60px;top:265.23px;font-size:16.2px;line-height:16.2px;font-weight:400;color:#111;font-family:'Liberation Sans';transform:scaleX(1.1272);">Caution:</div>
<div class="t" id="t149" style="left:537.70px;top:265.23px;font-size:16.2px;line-height:16.2px;font-weight:400;color:#111;font-family:'Liberation Sans';transform:scaleX(1.0031);">68C;</div>
<div class="t" id="t150" style="left:577.70px;top:265.23px;font-size:16.2px;line-height:16.2px;font-weight:400;color:#111;font-family:'Liberation Sans';transform:scaleX(1.0827);">Critical: 99C</div>
</div>
<svg style="position:absolute;left:480px;top:480px" width="420" height="420"><rect x="15" y="14" width="25" height="25" fill="#4ac2a9"/><rect x="40" y="14" width="25" height="25" fill="#4ac2a9"/><rect x="65" y="14" width="25" height="25" fill="#74f2a6"/><rect x="90" y="14" width="25" height="25" fill="#77f486"/><rect x="115" y="14" width="25" height="25" fill="#82f57e"/><rect x="140" y="14" width="25" height="25" fill="#a5f575"/><rect x="165" y="14" width="25" height="25" fill="#c0f573"/><rect x="190" y="14" width="25" height="25" fill="#daf573"/><rect x="215" y="14" width="25" height="25" fill="#ebf575"/><rect x="240" y="14" width="25" height="25" fill="#fcf579"/><rect x="265" y="14" width="25" height="25" fill="#fcf579"/><rect x="290" y="14" width="25" height="25" fill="#f9f578"/><rect x="315" y="14" width="25" height="25" fill="#e4f574"/><rect x="340" y="14" width="25" height="25" fill="#c0f573"/><rect x="365" y="14" width="25" height="25" fill="#82f57e"/><rect x="15" y="39" width="25" height="25" fill="#4ac2a9"/><rect x="40" y="39" width="25" height="25" fill="#77f486"/><rect x="65" y="39" width="25" height="25" fill="#86f57d"/><rect x="90" y="39" width="25" height="25" fill="#adf574"/><rect x="115" y="39" width="25" height="25" fill="#c8f572"/><rect x="140" y="39" width="25" height="25" fill="#e8f574"/><rect x="165" y="39" width="25" height="25" fill="#fdea7a"/><rect x="190" y="39" width="25" height="25" fill="#fdca79"/><rect x="215" y="39" width="25" height="25" fill="#fbb477"/><rect x="240" y="39" width="25" height="25" fill="#fba375"/><rect x="265" y="39" width="25" height="25" fill="#fba375"/><rect x="290" y="39" width="25" height="25" fill="#fba575"/><rect x="315" y="39" width="25" height="25" fill="#fbb477"/><rect x="340" y="39" width="25" height="25" fill="#fde77a"/><rect x="365" y="39" width="25" height="25" fill="#c8f572"/><rect x="15" y="64" width="25" height="25" fill="#74f2a6"/><rect x="40" y="64" width="25" height="25" fill="#7ef57f"/><rect x="65" y="64" width="25" height="25" fill="#adf574"/><rect x="90" y="64" width="25" height="25" fill="#d0f572"/><rect x="115" y="64" width="25" height="25" fill="#ebf575"/><rect x="140" y="64" width="25" height="25" fill="#fde57a"/><rect x="165" y="64" width="25" height="25" fill="#fdca79"/><rect x="190" y="64" width="25" height="25" fill="#fbb477"/><rect x="215" y="64" width="25" height="25" fill="#fa9a73"/><rect x="240" y="64" width="25" height="25" fill="#f98e71"/><rect x="265" y="64" width="25" height="25" fill="#fa9672"/><rect x="290" y="64" width="25" height="25" fill="#fba174"/><rect x="315" y="64" width="25" height="25" fill="#fbb477"/><rect x="340" y="64" width="25" height="25" fill="#fdd37a"/><rect x="365" y="64" width="25" height="25" fill="#d0f572"/><rect x="15" y="89" width="25" height="25" fill="#71f29d"/><rect x="40" y="89" width="25" height="25" fill="#9df577"/><rect x="65" y="89" width="25" height="25" fill="#c0f573"/><rect x="90" y="89" width="25" height="25" fill="#e1f574"/><rect x="115" y="89" width="25" height="25" fill="#fcf579"/><rect x="140" y="89" width="25" height="25" fill="#fdda7a"/><rect x="165" y="89" width="25" height="25" fill="#fcc178"/><rect x="190" y="89" width="25" height="25" fill="#fbaa76"/><rect x="215" y="89" width="25" height="25" fill="#fa9872"/><rect x="240" y="89" width="25" height="25" fill="#f99071"/><rect x="265" y="89" width="25" height="25" fill="#fa9672"/><rect x="290" y="89" width="25" height="25" fill="#fba375"/><rect x="315" y="89" width="25" height="25" fill="#fbb477"/><rect x="340" y="89" width="25" height="25" fill="#fdce7a"/><rect x="365" y="89" width="25" height="25" fill="#e1f574"/><rect x="15" y="114" width="25" height="25" fill="#74f48c"/><rect x="40" y="114" width="25" height="25" fill="#a1f576"/><rect x="65" y="114" width="25" height="25" fill="#c8f572"/><rect x="90" y="114" width="25" height="25" fill="#e8f574"/><rect x="115" y="114" width="25" height="25" fill="#fdec7a"/><rect x="140" y="114" width="25" height="25" fill="#fdd57a"/><rect x="165" y="114" width="25" height="25" fill="#fcbd78"/><rect x="190" y="114" width="25" height="25" fill="#fba776"/><rect x="215" y="114" width="25" height="25" fill="#fa9872"/><rect x="240" y="114" width="25" height="25" fill="#fa9472"/><rect x="265" y="114" width="25" height="25" fill="#fa9672"/><rect x="290" y="114" width="25" height="25" fill="#fba174"/><rect x="315" y="114" width="25" height="25" fill="#fbb077"/><rect x="340" y="114" width="25" height="25" fill="#fdca79"/><rect x="365" y="114" width="25" height="25" fill="#e8f574"/><rect x="15" y="139" width="25" height="25" fill="#74f48c"/><rect x="40" y="139" width="25" height="25" fill="#adf574"/><rect x="65" y="139" width="25" height="25" fill="#d3f572"/><rect x="90" y="139" width="25" height="25" fill="#f2f576"/><rect x="115" y="139" width="25" height="25" fill="#fdea7a"/><rect x="140" y="139" width="25" height="25" fill="#fdd57a"/><rect x="165" y="139" width="25" height="25" fill="#fcbf78"/><rect x="190" y="139" width="25" height="25" fill="#fbae77"/><rect x="215" y="139" width="25" height="25" fill="#fa9c74"/><rect x="240" y="139" width="25" height="25" fill="#f99271"/><rect x="265" y="139" width="25" height="25" fill="#f98e71"/><rect x="290" y="139" width="25" height="25" fill="#fa9a73"/><rect x="315" y="139" width="25" height="25" fill="#fbac76"/><rect x="340" y="139" width="25" height="25" fill="#fcc579"/><rect x="365" y="139" width="25" height="25" fill="#e1f574"/><rect x="15" y="164" width="25" height="25" fill="#74f48c"/><rect x="40" y="164" width="25" height="25" fill="#b5f574"/><rect x="65" y="164" width="25" height="25" fill="#d6f573"/><rect x="90" y="164" width="25" height="25" fill="#f5f577"/><rect x="115" y="164" width="25" height="25" fill="#fde27a"/><rect x="140" y="164" width="25" height="25" fill="#fdd07a"/><rect x="165" y="164" width="25" height="25" fill="#fcbf78"/><rect x="190" y="164" width="25" height="25" fill="#fbac76"/><rect x="215" y="164" width="25" height="25" fill="#fa9c74"/><rect x="240" y="164" width="25" height="25" fill="#f99071"/><rect x="265" y="164" width="25" height="25" fill="#f98e71"/><rect x="290" y="164" width="25" height="25" fill="#fa9672"/><rect x="315" y="164" width="25" height="25" fill="#fba575"/><rect x="340" y="164" width="25" height="25" fill="#fcc178"/><rect x="365" y="164" width="25" height="25" fill="#ebf575"/><rect x="15" y="189" width="25" height="25" fill="#77f486"/><rect x="40" y="189" width="25" height="25" fill="#c0f573"/><rect x="65" y="189" width="25" height="25" fill="#e4f574"/><rect x="90" y="189" width="25" height="25" fill="#fcf579"/><rect x="115" y="189" width="25" height="25" fill="#fddd7a"/><rect x="140" y="189" width="25" height="25" fill="#fdce7a"/><rect x="165" y="189" width="25" height="25" fill="#fcbf78"/><rect x="190" y="189" width="25" height="25" fill="#fbb077"/><rect x="215" y="189" width="25" height="25" fill="#fba375"/><rect x="240" y="189" width="25" height="25" fill="#fa9672"/><rect x="265" y="189" width="25" height="25" fill="#fa9372"/><rect x="290" y="189" width="25" height="25" fill="#fa9a73"/><rect x="315" y="189" width="25" height="25" fill="#fba776"/><rect x="340" y="189" width="25" height="25" fill="#fcc178"/><rect x="365" y="189" width="25" height="25" fill="#eff576"/><rect x="15" y="214" width="25" height="25" fill="#77f486"/><rect x="40" y="214" width="25" height="25" fill="#c8f572"/><rect x="65" y="214" width="25" height="25" fill="#eff576"/><rect x="90" y="214" width="25" height="25" fill="#fdea7a"/><rect x="115" y="214" width="25" height="25" fill="#fdda7a"/><rect x="140" y="214" width="25" height="25" fill="#fdcc7a"/><rect x="165" y="214" width="25" height="25" fill="#fcbf78"/><rect x="190" y="214" width="25" height="25" fill="#fbb077"/><rect x="215" y="214" width="25" height="25" fill="#fba575"/><rect x="240" y="214" width="25" height="25" fill="#fb9f74"/><rect x="265" y="214" width="25" height="25" fill="#fa9872"/><rect x="290" y="214" width="25" height="25" fill="#fb9f74"/><rect x="315" y="214" width="25" height="25" fill="#fba776"/><rect x="340" y="214" width="25" height="25" fill="#fcbd78"/><rect x="365" y="214" width="25" height="25" fill="#f2f576"/><rect x="15" y="239" width="25" height="25" fill="#7af580"/><rect x="40" y="239" width="25" height="25" fill="#d3f572"/><rect x="65" y="239" width="25" height="25" fill="#fcf379"/><rect x="90" y="239" width="25" height="25" fill="#fde27a"/><rect x="115" y="239" width="25" height="25" fill="#fdd87a"/><rect x="140" y="239" width="25" height="25" fill="#fdca79"/><rect x="165" y="239" width="25" height="25" fill="#fcbd78"/><rect x="190" y="239" width="25" height="25" fill="#fbb077"/><rect x="215" y="239" width="25" height="25" fill="#fbaa76"/><rect x="240" y="239" width="25" height="25" fill="#fb9f74"/><rect x="265" y="239" width="25" height="25" fill="#fa9a73"/><rect x="290" y="239" width="25" height="25" fill="#fb9f74"/><rect x="315" y="239" width="25" height="25" fill="#fba575"/><rect x="340" y="239" width="25" height="25" fill="#fbb477"/><rect x="365" y="239" width="25" height="25" fill="#f2f576"/><rect x="15" y="264" width="25" height="25" fill="#7ef57f"/><rect x="40" y="264" width="25" height="25" fill="#ebf575"/><rect x="65" y="264" width="25" height="25" fill="#fdd87a"/><rect x="90" y="264" width="25" height="25" fill="#fdca79"/><rect x="115" y="264" width="25" height="25" fill="#fcc579"/><rect x="140" y="264" width="25" height="25" fill="#fcc178"/><rect x="165" y="264" width="25" height="25" fill="#fcbf78"/><rect x="190" y="264" width="25" height="25" fill="#fcbb78"/><rect x="215" y="264" width="25" height="25" fill="#fbb077"/><rect x="240" y="264" width="25" height="25" fill="#fba575"/><rect x="265" y="264" width="25" height="25" fill="#fa9a73"/><rect x="290" y="264" width="25" height="25" fill="#fa9c74"/><rect x="315" y="264" width="25" height="25" fill="#fba776"/><rect x="340" y="264" width="25" height="25" fill="#fcbf78"/><rect x="365" y="264" width="25" height="25" fill="#eff576"/><rect x="15" y="289" width="25" height="25" fill="#7ef57f"/><rect x="40" y="289" width="25" height="25" fill="#eff576"/><rect x="65" y="289" width="25" height="25" fill="#fdd87a"/><rect x="90" y="289" width="25" height="25" fill="#fbb477"/><rect x="115" y="289" width="25" height="25" fill="#fbb477"/><rect x="140" y="289" width="25" height="25" fill="#fcbf78"/><rect x="165" y="289" width="25" height="25" fill="#fcc378"/><rect x="190" y="289" width="25" height="25" fill="#fcbf78"/><rect x="215" y="289" width="25" height="25" fill="#fcbb78"/><rect x="240" y="289" width="25" height="25" fill="#fbb077"/><rect x="265" y="289" width="25" height="25" fill="#fbaa76"/><rect x="290" y="289" width="25" height="25" fill="#fba776"/><rect x="315" y="289" width="25" height="25" fill="#fbac76"/><rect x="340" y="289" width="25" height="25" fill="#fcbf78"/><rect x="365" y="289" width="25" height="25" fill="#eff576"/><rect x="15" y="314" width="25" height="25" fill="#82f57e"/><rect x="40" y="314" width="25" height="25" fill="#eff576"/><rect x="65" y="314" width="25" height="25" fill="#fdd57a"/><rect x="90" y="314" width="25" height="25" fill="#fbb477"/><rect x="115" y="314" width="25" height="25" fill="#fbb477"/><rect x="140" y="314" width="25" height="25" fill="#fcc378"/><rect x="165" y="314" width="25" height="25" fill="#fdca79"/><rect x="190" y="314" width="25" height="25" fill="#fcc378"/><rect x="215" y="314" width="25" height="25" fill="#fcbf78"/><rect x="240" y="314" width="25" height="25" fill="#fcbb78"/><rect x="265" y="314" width="25" height="25" fill="#fbb077"/><rect x="290" y="314" width="25" height="25" fill="#fbac76"/><rect x="315" y="314" width="25" height="25" fill="#fbac76"/><rect x="340" y="314" width="25" height="25" fill="#fba776"/><rect x="365" y="314" width="25" height="25" fill="#fdd07a"/><rect x="15" y="339" width="25" height="25" fill="#74f48c"/><rect x="40" y="339" width="25" height="25" fill="#c8f572"/><rect x="65" y="339" width="25" height="25" fill="#f5f577"/><rect x="90" y="339" width="25" height="25" fill="#fde77a"/><rect x="115" y="339" width="25" height="25" fill="#fde27a"/><rect x="140" y="339" width="25" height="25" fill="#fde77a"/><rect x="165" y="339" width="25" height="25" fill="#fcf079"/><rect x="190" y="339" width="25" height="25" fill="#fcf079"/><rect x="215" y="339" width="25" height="25" fill="#fde77a"/><rect x="240" y="339" width="25" height="25" fill="#fdda7a"/><rect x="265" y="339" width="25" height="25" fill="#fbb077"/><rect x="290" y="339" width="25" height="25" fill="#fbb077"/><rect x="315" y="339" width="25" height="25" fill="#fcbf78"/><rect x="340" y="339" width="25" height="25" fill="#fcbd78"/><rect x="365" y="339" width="25" height="25" fill="#fdd87a"/><rect x="15" y="364" width="25" height="25" fill="#74f2a6"/><rect x="40" y="364" width="25" height="25" fill="#77f486"/><rect x="65" y="364" width="25" height="25" fill="#b5f574"/><rect x="90" y="364" width="25" height="25" fill="#c0f573"/><rect x="115" y="364" width="25" height="25" fill="#c4f573"/><rect x="140" y="364" width="25" height="25" fill="#c4f573"/><rect x="165" y="364" width="25" height="25" fill="#c8f572"/><rect x="190" y="364" width="25" height="25" fill="#bcf573"/><rect x="215" y="364" width="25" height="25" fill="#c8f572"/><rect x="240" y="364" width="25" height="25" fill="#d3f572"/><rect x="265" y="364" width="25" height="25" fill="#fdea7a"/><rect x="290" y="364" width="25" height="25" fill="#fdea7a"/><rect x="315" y="364" width="25" height="25" fill="#e4f574"/><rect x="340" y="364" width="25" height="25" fill="#ccf572"/><rect x="365" y="364" width="25" height="25" fill="#9df577"/><rect x="15.0" y="14" width="1.2" height="376" fill="#161616"/><rect x="15" y="14" width="376" height="1.2" fill="#161616"/><rect x="40.0" y="14" width="1.2" height="376" fill="#161616"/><rect x="15" y="39" width="376" height="1.2" fill="#161616"/><rect x="65.0" y="14" width="1.2" height="376" fill="#161616"/><rect x="15" y="64" width="376" height="1.2" fill="#161616"/><rect x="90.0" y="14" width="1.2" height="376" fill="#161616"/><rect x="15" y="89" width="376" height="1.2" fill="#161616"/><rect x="115.0" y="14" width="1.2" height="376" fill="#161616"/><rect x="15" y="114" width="376" height="1.2" fill="#161616"/><rect x="140.0" y="14" width="1.2" height="376" fill="#161616"/><rect x="15" y="139" width="376" height="1.2" fill="#161616"/><rect x="165.0" y="14" width="1.2" height="376" fill="#161616"/><rect x="15" y="164" width="376" height="1.2" fill="#161616"/><rect x="190.0" y="14" width="1.2" height="376" fill="#161616"/><rect x="15" y="189" width="376" height="1.2" fill="#161616"/><rect x="215.0" y="14" width="1.2" height="376" fill="#161616"/><rect x="15" y="214" width="376" height="1.2" fill="#161616"/><rect x="240.0" y="14" width="1.2" height="376" fill="#161616"/><rect x="15" y="239" width="376" height="1.2" fill="#161616"/><rect x="265.0" y="14" width="1.2" height="376" fill="#161616"/><rect x="15" y="264" width="376" height="1.2" fill="#161616"/><rect x="290.0" y="14" width="1.2" height="376" fill="#161616"/><rect x="15" y="289" width="376" height="1.2" fill="#161616"/><rect x="315.0" y="14" width="1.2" height="376" fill="#161616"/><rect x="15" y="314" width="376" height="1.2" fill="#161616"/><rect x="340.0" y="14" width="1.2" height="376" fill="#161616"/><rect x="15" y="339" width="376" height="1.2" fill="#161616"/><rect x="365.0" y="14" width="1.2" height="376" fill="#161616"/><rect x="15" y="364" width="376" height="1.2" fill="#161616"/><rect x="390.0" y="14" width="1.2" height="376" fill="#161616"/><rect x="15" y="389" width="376" height="1.2" fill="#161616"/><circle cx="265.6" cy="64.6" r="9.2" fill="rgba(75,150,30,0.52)" stroke="rgba(140,80,60,0.45)" stroke-width="0.9"/><circle cx="315.6" cy="64.6" r="9.2" fill="rgba(75,150,30,0.52)" stroke="rgba(140,80,60,0.45)" stroke-width="0.9"/><circle cx="240.6" cy="89.6" r="9.2" fill="rgba(75,150,30,0.52)" stroke="rgba(140,80,60,0.45)" stroke-width="0.9"/><circle cx="265.6" cy="164.6" r="9.2" fill="rgba(75,150,30,0.52)" stroke="rgba(140,80,60,0.45)" stroke-width="0.9"/><circle cx="290.6" cy="164.6" r="9.2" fill="rgba(75,150,30,0.52)" stroke="rgba(140,80,60,0.45)" stroke-width="0.9"/><circle cx="265.6" cy="214.6" r="9.2" fill="rgba(75,150,30,0.52)" stroke="rgba(140,80,60,0.45)" stroke-width="0.9"/><circle cx="340.6" cy="239.6" r="9.2" fill="rgba(75,150,30,0.52)" stroke="rgba(140,80,60,0.45)" stroke-width="0.9"/><circle cx="290.6" cy="264.6" r="9.2" fill="rgba(75,150,30,0.52)" stroke="rgba(140,80,60,0.45)" stroke-width="0.9"/><circle cx="115.6" cy="314.6" r="9.2" fill="rgba(75,150,30,0.52)" stroke="rgba(140,80,60,0.45)" stroke-width="0.9"/><circle cx="365.6" cy="339.6" r="9.2" fill="rgba(75,150,30,0.52)" stroke="rgba(140,80,60,0.45)" stroke-width="0.9"/><circle cx="290.6" cy="364.6" r="9.2" fill="rgba(75,150,30,0.52)" stroke="rgba(140,80,60,0.45)" stroke-width="0.9"/></svg>
<div style="position:absolute;left:773px;top:626px;width:205px;height:94px;background:#fff;border:1px solid #1a1a1a;box-sizing:border-box;box-shadow:3px 3px 4px rgba(0,0,0,0.28);"></div>
<div class="t" id="t151" style="left:783.40px;top:640.90px;font-size:16px;line-height:16px;font-weight:700;color:#111;font-family:'Liberation Sans';transform:scaleX(1.0474);">Sensor:</div>
<div class="t" id="t152" style="left:877.50px;top:640.90px;font-size:16px;line-height:16px;font-weight:400;color:#111;font-family:'Liberation Sans';transform:scaleX(1.1575);">05-Chipset</div>
<div class="t" id="t153" style="left:783.40px;top:666.00px;font-size:16px;line-height:16px;font-weight:700;color:#111;font-family:'Liberation Sans';transform:scaleX(1.0964);">Status:</div>
<svg style="position:absolute;left:876.5px;top:661.5px" width="17" height="17"><circle cx="8.3" cy="8.3" r="8.1" fill="#0aa883"/><path d="M3.9 8.9 L6.9 11.5 L12.5 5.9" fill="none" stroke="#fff" stroke-width="2.2"/></svg>
<div class="t" id="t154" style="left:898.00px;top:666.00px;font-size:16px;line-height:16px;font-weight:400;color:#111;font-family:'Liberation Sans';transform:scaleX(0.8957);">OK</div>
<div class="t" id="t155" style="left:782.30px;top:691.20px;font-size:16px;line-height:16px;font-weight:700;color:#111;font-family:'Liberation Sans';transform:scaleX(1.1041);">Reading:</div>
<div class="t" id="t156" style="left:877.50px;top:691.20px;font-size:16px;line-height:16px;font-weight:400;color:#111;font-family:'Liberation Sans';transform:scaleX(1.0904);">44C</div>
<svg style="position:absolute;left:738px;top:638px" width="26" height="28">
      <path d="M7.5 5 C7.5 3.2 9 2.5 10.4 2.5 C11.9 2.5 13.2 3.2 13.2 5 L13.2 11 C14.4 10.3 15.9 10.7 16.3 11.8 C17.4 11.2 18.9 11.7 19.2 13 C20.2 12.6 21.5 13.3 21.5 14.8 L21.5 19 C21.5 22.5 19.5 24.2 16.5 24.2 L13 24.2 C11 24.2 9.5 23.4 8.3 22 L3 16.6 C2 15.6 2.3 14 3.5 13.6 C4.7 13.2 6 13.8 7.5 15.3 Z" fill="#454545" stroke="#fff" stroke-width="1.1"/>
    </svg>
<div style="position:absolute;left:0;top:0;width:1657px;height:972px;mix-blend-mode:lighten;pointer-events:none"><div style="position:absolute;left:579.0px;top:301.3px;font-family:'Liberation Sans';font-weight:700;font-size:169px;line-height:200px;color:rgb(150,150,150);white-space:nowrap;transform:scaleX(0.98);transform-origin:0 0">X</div><div style="position:absolute;left:689.7px;top:301.3px;font-family:'Liberation Sans';font-weight:700;font-size:169px;line-height:200px;color:rgb(150,150,150);white-space:nowrap;transform:scaleX(0.9375);transform-origin:0 0">S</div><div style="position:absolute;left:797.4px;top:301.3px;font-family:'Liberation Sans';font-weight:700;font-size:169px;line-height:200px;color:rgb(150,150,150);white-space:nowrap;transform:scaleX(0.9375);transform-origin:0 0">S</div><div style="position:absolute;left:904.8px;top:301.3px;font-family:'Liberation Sans';font-weight:700;font-size:169px;line-height:200px;color:rgb(150,150,150);white-space:nowrap;transform:scaleX(0.96);transform-origin:0 0">.</div><div style="position:absolute;left:991.9px;top:301.3px;font-family:'Liberation Sans';font-weight:700;font-size:169px;line-height:200px;color:rgb(150,150,150);white-space:nowrap;transform:scaleX(1.0);transform-origin:0 0">s</div><div style="position:absolute;left:960.3px;top:342.7px;width:22.8px;height:21.2px;background:rgb(150,150,150)"></div><div style="position:absolute;left:960.3px;top:374.8px;width:22.8px;height:84px;background:rgb(150,150,150)"></div></div>
<div style="position:absolute;left:0;top:0;width:1657px;height:972px;mix-blend-mode:multiply;pointer-events:none"><div style="position:absolute;left:579.0px;top:301.3px;font-family:'Liberation Sans';font-weight:700;font-size:169px;line-height:200px;color:rgb(210,234,212);white-space:nowrap;transform:scaleX(0.98);transform-origin:0 0">X</div><div style="position:absolute;left:689.7px;top:301.3px;font-family:'Liberation Sans';font-weight:700;font-size:169px;line-height:200px;color:rgb(210,234,212);white-space:nowrap;transform:scaleX(0.9375);transform-origin:0 0">S</div><div style="position:absolute;left:797.4px;top:301.3px;font-family:'Liberation Sans';font-weight:700;font-size:169px;line-height:200px;color:rgb(210,234,212);white-space:nowrap;transform:scaleX(0.9375);transform-origin:0 0">S</div><div style="position:absolute;left:904.8px;top:301.3px;font-family:'Liberation Sans';font-weight:700;font-size:169px;line-height:200px;color:rgb(210,234,212);white-space:nowrap;transform:scaleX(0.96);transform-origin:0 0">.</div><div style="position:absolute;left:991.9px;top:301.3px;font-family:'Liberation Sans';font-weight:700;font-size:169px;line-height:200px;color:rgb(210,234,212);white-space:nowrap;transform:scaleX(1.0);transform-origin:0 0">s</div><div style="position:absolute;left:960.3px;top:342.7px;width:22.8px;height:21.2px;background:rgb(210,234,212)"></div><div style="position:absolute;left:960.3px;top:374.8px;width:22.8px;height:84px;background:rgb(210,234,212)"></div></div>
<div style="position:absolute;left:0px;top:954px;width:1654px;height:18px;background:#546370;"></div>
<svg style="position:absolute;left:1348px;top:954px" width="30" height="18"><circle cx="14.2" cy="16" r="10.4" fill="#01a982"/><path d="M10.2 6.6 A10.4 10.4 0 1 0 18.2 6.6" fill="none" stroke="#c3cacf" stroke-width="1.6"/><rect x="13.5" y="2" width="1.5" height="10" fill="#c3cacf"/></svg>
<div class="t" id="t157" style="left:1378.33px;top:960.45px;font-size:15px;line-height:15px;font-weight:700;color:#f0f2f4;font-family:'Liberation Sans';transform:scaleX(0.9677);">POWER: ON</div>
<svg style="position:absolute;left:1500px;top:955px" width="24" height="17"><circle cx="12" cy="13" r="8.3" fill="none" stroke="#bfc6cc" stroke-width="1.8"/></svg>
<div class="t" id="t158" style="left:1529.00px;top:960.45px;font-size:15px;line-height:15px;font-weight:700;color:#f0f2f4;font-family:'Liberation Sans';transform:scaleX(0.9410);">UID: OFF</div>
</body></html>
